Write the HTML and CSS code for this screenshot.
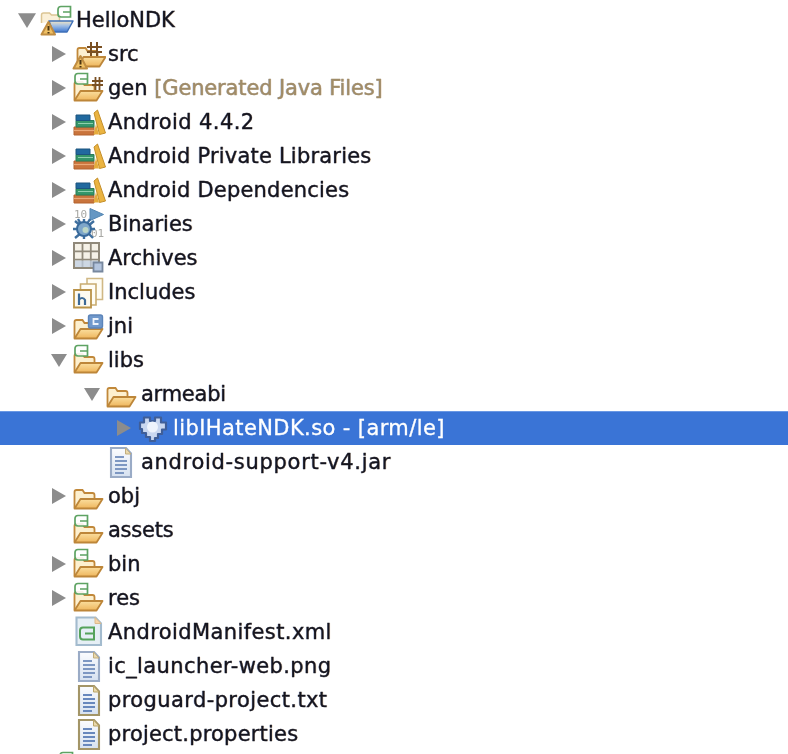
FILE: index.html
```html
<!DOCTYPE html>
<html lang="en">
<head>
<meta charset="utf-8">
<title>HelloNDK</title>
<link rel="stylesheet" href="styles.css">
</head>
<body>
<svg class="defs" width="0" height="0" aria-hidden="true">
  <defs>
    <linearGradient id="tan" x1="0" y1="0" x2="0" y2="1"><stop offset="0" stop-color="#fbdf9f"/><stop offset="1" stop-color="#eeb55c"/></linearGradient>
    <linearGradient id="paper" x1="0" y1="0" x2="0" y2="1"><stop offset="0" stop-color="#fbfcfe"/><stop offset="1" stop-color="#d6e1f0"/></linearGradient>
    <linearGradient id="bowl" x1="0" y1="0" x2="0" y2="1"><stop offset="0" stop-color="#f4e6c4"/><stop offset=".45" stop-color="#9dbce6"/><stop offset="1" stop-color="#3f78cf"/></linearGradient>
    <symbol id="folder" viewBox="0 0 34 34">
      <path d="M2.500 29V13q0-2 2-2h6l2 3h8q2 0 2 2v3" fill="#fdf0cf" stroke="#c1883a" stroke-width="1.800"/>
      <path d="M2.500 29.500 8.500 20h22l-6 9.500z" fill="url(#tan)" stroke="#bd8639" stroke-width="1.800" stroke-linejoin="round"/>
    </symbol>
    <symbol id="badge" viewBox="0 0 34 34">
      <path d="M15.500 2.500H6q-3 0-3 3v4.500q0 3 3 3h9.500zM8 8h7.500" fill="#fff" fill-opacity=".9" stroke="#5ea363" stroke-width="1.700"/>
    </symbol>
    <symbol id="warn" viewBox="0 0 34 34">
      <path d="M8.500 19 15 31.500H1.500z" fill="#efc064" stroke="#c08d42" stroke-width="2" stroke-linejoin="round"/>
      <path d="M8.500 23v4.500M8.500 29v1.500" stroke="#4a3412" stroke-width="2"/>
    </symbol>
    <symbol id="hash" viewBox="0 0 34 34">
      <path d="M15 10H30M15 15H30M19 5V19M25 5V19" stroke="#7a5023" stroke-width="2" fill="none"/>
    </symbol>
    <symbol id="hashsmall" viewBox="0 0 34 34">
      <path d="M20 10H31M20 14H31M23.500 6V19M27.500 6V19" stroke="#7a5023" stroke-width="1.800" fill="none"/>
    </symbol>
    <symbol id="project" viewBox="0 0 34 34">
      <path d="M1.500 20V12q0-2 2-2h6l2 2h8v6" fill="#fbf0d8" stroke="#dcc594" stroke-width="1.500"/>
      <path d="M9 18H33l-6 11H13z" fill="url(#bowl)" stroke="#3f70b8" stroke-width="1.500" stroke-linejoin="round"/>
    </symbol>
    <symbol id="books" viewBox="0 0 34 34">
      <path d="M2 22h20v8H2z" fill="#c9743c" stroke="#b3632f" stroke-width="1"/>
      <path d="M2 25.500h20" stroke="#eaa877" stroke-width="1.200"/>
      <path d="M4 15.500h18V22H4z" fill="#35966a" stroke="#2b7d57" stroke-width="1"/>
      <path d="M6 18.500h15" stroke="#8fd0ae" stroke-width="1"/>
      <path d="M4 10h14v5.500H4z" fill="#21699f" stroke="#1c557f" stroke-width="1"/>
      <path d="M22 8 25.500 5 33.500 28 27.500 29.500z" fill="#ebb441" stroke="#c48f2b" stroke-width="1"/>
      <path d="M21.500 29.500 24 19 27 29.500z" fill="#e6ac3c"/>
    </symbol>
    <symbol id="binaries" viewBox="0 0 34 34">
      <text class="bits" x="2" y="11">10</text>
      <text class="bits" x="19" y="30">01</text>
      <path d="M18 1.500 31.500 7.500 18 13.500z" fill="#6597c3" stroke="#5285b2" stroke-width="1"/>
      <path d="M3 14 9 19M22 14 16 19M1 22H7M23 22H17M3 31 9 26M21 31 16 26M12 12V17M12 32V27M6 12 9 17M18 12 15 17" stroke="#3f6f9e" stroke-width="2.400"/>
      <circle cx="12" cy="22" r="7" fill="#7ea6c9" stroke="#37699b" stroke-width="2"/>
      <circle cx="13.500" cy="23" r="3" fill="#bcd6c6"/>
    </symbol>
    <symbol id="archives" viewBox="0 0 34 34">
      <path d="M2 2h25v25H2z" fill="#f5f1e7" stroke="#90897a" stroke-width="2"/>
      <path d="M10.500 2v25M18.800 2v25M2 10.300h25M2 18.600h25" stroke="#90897a" stroke-width="1.800"/>
      <path d="M3 19.500h23v6.500H3z" fill="#bfcde2" fill-opacity=".75"/>
      <path d="M21.500 21.500h9v9h-9z" fill="#b4c5de" stroke="#77879e" stroke-width="1.800"/>
    </symbol>
    <symbol id="includes" viewBox="0 0 34 34">
      <path d="M15 3.500h15.500v21H15z" fill="#fffdf4" stroke="#d0b885" stroke-width="1.600"/>
      <path d="M8.500 9h15.500v21H8.500z" fill="#fffdf4" stroke="#c9ac70" stroke-width="1.600"/>
      <path d="M2 15h17v17.500H2z" fill="#fdfaf0" stroke="#ba9349" stroke-width="1.800"/>
      <path d="M7 18.500v11.500M7 25q1-2 3-2t3 2v5" fill="none" stroke="#3d6a97" stroke-width="2.200"/>
    </symbol>
    <symbol id="csquare" viewBox="0 0 34 34">
      <rect x="16.500" y="6" width="14" height="13" rx="2" fill="#7098cb" stroke="#5c84b9" stroke-width="1.400"/>
      <path d="M26.500 10h-5v5h5" fill="none" stroke="#eef3fb" stroke-width="1.800"/>
    </symbol>
    <symbol id="lib" viewBox="0 0 34 34">
      <path d="M3 11.500H7V6.500H13V10H18V6.500H24V11.500H29V18.500H25V23H21V27H18V30H13V26H9V22H5V18H3z" fill="#c9d7f0" stroke="#3f5e98" stroke-width="2.200" stroke-linejoin="round"/>
      <circle cx="15.500" cy="16" r="5.500" fill="#eef3fc"/>
    </symbol>
    <symbol id="doc" viewBox="0 0 34 34">
      <path d="M4 3h15l5 5.500V32H4z" fill="url(#paper)" stroke="#9aabc6" stroke-width="2.100"/>
      <path d="M18.500 3v6H24z" fill="#ead9ac" stroke="#c1ad7c"/>
      <path d="M8 12h9M8 16h12M8 20h12M8 24h12M8 28h9" stroke="#7d97c2" stroke-width="1.800"/>
    </symbol>
    <symbol id="doctan" viewBox="0 0 34 34">
      <path d="M4 3h15l5 5.500V32H4z" fill="url(#paper)" stroke="#a39567" stroke-width="2.100"/>
      <path d="M18.500 3v6H24z" fill="#ead9ac" stroke="#b9a468"/>
      <path d="M8 12h9M8 16h12M8 20h12M8 24h12M8 28h9" stroke="#6888bd" stroke-width="1.800"/>
    </symbol>
    <symbol id="manifest" viewBox="0 0 34 34">
      <path d="M3.500 2.500h19l5.500 6v21.500H3.500z" fill="#e6eff5" stroke="#a3bbce" stroke-width="2.100"/>
      <path d="M22 2.500v6h6z" fill="#f6d4a8" stroke="#dcb98a"/>
      <path d="M21 12.500H10q-3 0-3 3v6q0 3 3 3h11zM12 18.500h9" fill="none" stroke="#55a35b" stroke-width="2"/>
    </symbol>
    <symbol id="open" viewBox="0 0 16 16"><path d="M0 2H16L8 15z" fill="#8c8c8c"/></symbol>
    <symbol id="closed" viewBox="0 0 16 16"><path d="M1 0 15 8 1 16z" fill="#8c8c8c"/></symbol>
  </defs>
</svg>

<ul class="tree">
  <li class="row l0">
    <svg class="arrow root-arrow"><use href="#open"/></svg>
    <svg class="icon"><use href="#project"/><use href="#badge" x="15" y="1"/><use href="#warn"/></svg>
    <span>HelloNDK</span>
  </li>
  <li class="row l1">
    <svg class="arrow"><use href="#closed"/></svg>
    <svg class="icon"><use href="#folder" x="3"/><use href="#hash"/><use href="#warn"/></svg>
    <span>src</span>
  </li>
  <li class="row l1">
    <svg class="arrow"><use href="#closed"/></svg>
    <svg class="icon"><use href="#folder"/><use href="#hashsmall"/><use href="#badge"/></svg>
    <span>gen <em class="deco">[Generated Java Files]</em></span>
  </li>
  <li class="row l1">
    <svg class="arrow"><use href="#closed"/></svg>
    <svg class="icon"><use href="#books"/></svg>
    <span class="ls-m">Android 4.4.2</span>
  </li>
  <li class="row l1">
    <svg class="arrow"><use href="#closed"/></svg>
    <svg class="icon"><use href="#books"/></svg>
    <span class="ls-s">Android Private Libraries</span>
  </li>
  <li class="row l1">
    <svg class="arrow"><use href="#closed"/></svg>
    <svg class="icon"><use href="#books"/></svg>
    <span class="ls-s">Android Dependencies</span>
  </li>
  <li class="row l1">
    <svg class="arrow"><use href="#closed"/></svg>
    <svg class="icon"><use href="#binaries"/></svg>
    <span>Binaries</span>
  </li>
  <li class="row l1">
    <svg class="arrow"><use href="#closed"/></svg>
    <svg class="icon"><use href="#archives"/></svg>
    <span>Archives</span>
  </li>
  <li class="row l1">
    <svg class="arrow"><use href="#closed"/></svg>
    <svg class="icon"><use href="#includes"/></svg>
    <span>Includes</span>
  </li>
  <li class="row l1">
    <svg class="arrow"><use href="#closed"/></svg>
    <svg class="icon"><use href="#folder"/><use href="#csquare"/></svg>
    <span>jni</span>
  </li>
  <li class="row l1">
    <svg class="arrow"><use href="#open"/></svg>
    <svg class="icon"><use href="#folder"/><use href="#badge"/></svg>
    <span>libs</span>
  </li>
  <li class="row l2">
    <svg class="arrow"><use href="#open"/></svg>
    <svg class="icon"><use href="#folder"/></svg>
    <span class="ls-n">armeabi</span>
  </li>
  <li class="row l3 selected">
    <svg class="arrow"><use href="#closed"/></svg>
    <svg class="icon"><use href="#lib"/></svg>
    <span class="ls-m">libIHateNDK.so - [arm/le]</span>
  </li>
  <li class="row l2">
    <span class="arrow"></span>
    <svg class="icon"><use href="#doc" x="2"/></svg>
    <span class="ls-l">android-support-v4.jar</span>
  </li>
  <li class="row l1">
    <svg class="arrow"><use href="#closed"/></svg>
    <svg class="icon"><use href="#folder"/></svg>
    <span>obj</span>
  </li>
  <li class="row l1">
    <span class="arrow"></span>
    <svg class="icon"><use href="#folder"/><use href="#badge"/></svg>
    <span class="ls-n">assets</span>
  </li>
  <li class="row l1">
    <svg class="arrow"><use href="#closed"/></svg>
    <svg class="icon"><use href="#folder"/><use href="#badge"/></svg>
    <span>bin</span>
  </li>
  <li class="row l1">
    <svg class="arrow"><use href="#closed"/></svg>
    <svg class="icon"><use href="#folder"/><use href="#badge"/></svg>
    <span>res</span>
  </li>
  <li class="row l1">
    <span class="arrow"></span>
    <svg class="icon"><use href="#manifest" x="1"/></svg>
    <span class="ls-m">AndroidManifest.xml</span>
  </li>
  <li class="row l1">
    <span class="arrow"></span>
    <svg class="icon"><use href="#doc" x="3"/></svg>
    <span class="ls-m">ic_launcher-web.png</span>
  </li>
  <li class="row l1">
    <span class="arrow"></span>
    <svg class="icon"><use href="#doctan" x="3"/></svg>
    <span class="ls-m">proguard-project.txt</span>
  </li>
  <li class="row l1">
    <span class="arrow"></span>
    <svg class="icon"><use href="#doctan" x="3"/></svg>
    <span class="ls-s">project.properties</span>
  </li>
  <li class="row clipped">
    <span class="arrow"></span>
    <svg class="icon"><use href="#badge" y="-1"/></svg>
  </li>
</ul>
</body>
</html>
```

FILE: styles.css
```css
html, body {
  margin: 0;
  padding: 0;
  height: 754px;
  overflow: hidden;
  background: #ffffff;
}

.defs {
  position: absolute;
}

.tree {
  list-style: none;
  margin: 0;
  padding: 3px 0 0;
  font-family: "DejaVu Sans", sans-serif;
  font-size: 21px;
  color: #15151f;
}

.row {
  display: flex;
  align-items: center;
  height: 34px;
  white-space: nowrap;
}

.row span:last-child {
  filter: blur(0.4px);
  -webkit-text-stroke: 0.3px currentColor;
  text-shadow: 0.6px 0 rgba(190, 110, 20, 0.28), -0.6px 0 rgba(30, 90, 200, 0.28);
}

.row .ls-n { letter-spacing: -0.25px; }
.row .ls-s { letter-spacing: 0.2px; }
.row .ls-m { letter-spacing: 0.4px; }
.row .ls-l { letter-spacing: 0.7px; }

.l0 { padding-left: 18px; }
.l1 { padding-left: 51px; }
.l2 { padding-left: 84px; }
.l3 { padding-left: 116px; }
.clipped { padding-left: 36px; }

.arrow {
  flex: none;
  display: block;
  width: 16px;
  height: 16px;
  margin-right: 5px;
  filter: blur(0.4px);
}

.root-arrow {
  width: 18px;
  height: 18px;
  margin-right: 4px;
}

.icon {
  flex: none;
  display: block;
  width: 34px;
  height: 34px;
  margin-right: 2px;
  filter: blur(0.45px);
}

.deco {
  font-style: normal;
  color: #a08c68;
  letter-spacing: -0.15px;
}

.selected {
  background: #3a74d6;
  color: #ffffff;
  box-shadow: inset 0 1px 0 #6a98e4;
}

.row.selected span:last-child {
  text-shadow: none;
}

.bits {
  font-family: "DejaVu Sans Mono", monospace;
  font-size: 11px;
  fill: #a8a8a4;
}
```
